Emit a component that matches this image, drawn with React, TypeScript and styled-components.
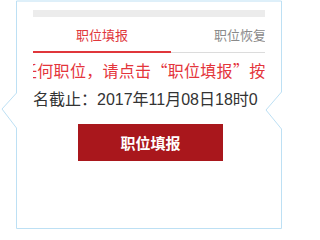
import { createGlobalStyle, styled } from 'styled-components';

const GlobalStyle = createGlobalStyle`
  html, body {
    margin: 0;
    padding: 0;
    background: #fff;
  }
  body {
    font-family: "Noto Sans CJK SC", "Noto Sans", sans-serif;
  }
`;

const Frame = styled.div`
  position: relative;
  width: 283px;
  height: 230px;
  overflow: hidden;
  background: #fff;
`;

const FrameLine = styled.svg`
  position: absolute;
  inset: 0;
  pointer-events: none;
`;

const Panel = styled.div`
  position: relative;
  margin-left: 33px;
  width: 232px;
  padding-top: 10px;
  overflow: hidden;
`;

const TopBar = styled.div`
  height: 7px;
  background: #ececec;
`;

const Tabs = styled.div`
  display: flex;
  width: 276px;
  margin-top: 8px;
  border-bottom: 1px solid #dcdcdc;
`;

const Tab = styled.div<{ $active?: boolean }>`
  flex: 0 0 138px;
  height: 28px;
  box-sizing: border-box;
  line-height: 20px;
  text-align: center;
  font-size: 13px;
  color: ${(p) => (p.$active ? '#e0363b' : '#8a8a8a')};
  border-bottom: 2px solid ${(p) => (p.$active ? '#e0363b' : 'transparent')};
  margin-bottom: -1px;
`;

const Notice = styled.div`
  padding-top: 2px;
`;

const Line = styled.div<{ $tone: 'red' | 'dark'; $shift: number }>`
  white-space: nowrap;
  font-size: 16px;
  height: 30px;
  line-height: 30px;
  font-family: ${(p) =>
    p.$tone === 'red'
      ? '"Noto Sans CJK SC", sans-serif'
      : '"Liberation Sans", "Noto Sans CJK SC", sans-serif'};
  font-feature-settings: ${(p) => (p.$tone === 'red' ? '"fwid" 1' : 'normal')};
  letter-spacing: ${(p) => (p.$tone === 'red' ? '0.3px' : '0')};
  color: ${(p) => (p.$tone === 'red' ? '#e4353b' : '#333')};
  text-indent: ${(p) => p.$shift}px;
`;

const ButtonRow = styled.div`
  display: flex;
  justify-content: center;
  padding-top: 9px;
  margin-left: 3px;
`;

const SubmitButton = styled.button`
  width: 145px;
  height: 37px;
  border: none;
  background: #a9171c;
  color: #fff;
  font-family: inherit;
  font-size: 15px;
  font-weight: 700;
  cursor: pointer;
`;

function App() {
  return (
    <>
      <GlobalStyle />
      <Frame>
        <FrameLine width="283" height="230" viewBox="0 0 283 230">
          <path
            d="M16.5 1 H281.5 V92 L266 110 L281.5 129 V228.5 H16.5 V128 L2 109 L16.5 93 Z"
            fill="none"
            stroke="#bde0f4"
            strokeWidth="1"
          />
        </FrameLine>
        <Panel>
          <TopBar />
          <Tabs>
            <Tab $active>职位填报</Tab>
            <Tab>职位恢复</Tab>
          </Tabs>
          <Notice>
            <Line $tone="red" $shift={-12}>
              任何职位，请点击“职位填报”按钮进行填报
            </Line>
            <Line $tone="dark" $shift={0}>
              名截止：2017年11月08日18时0
            </Line>
          </Notice>
          <ButtonRow>
            <SubmitButton>职位填报</SubmitButton>
          </ButtonRow>
        </Panel>
      </Frame>
    </>
  );
}

export default App;
